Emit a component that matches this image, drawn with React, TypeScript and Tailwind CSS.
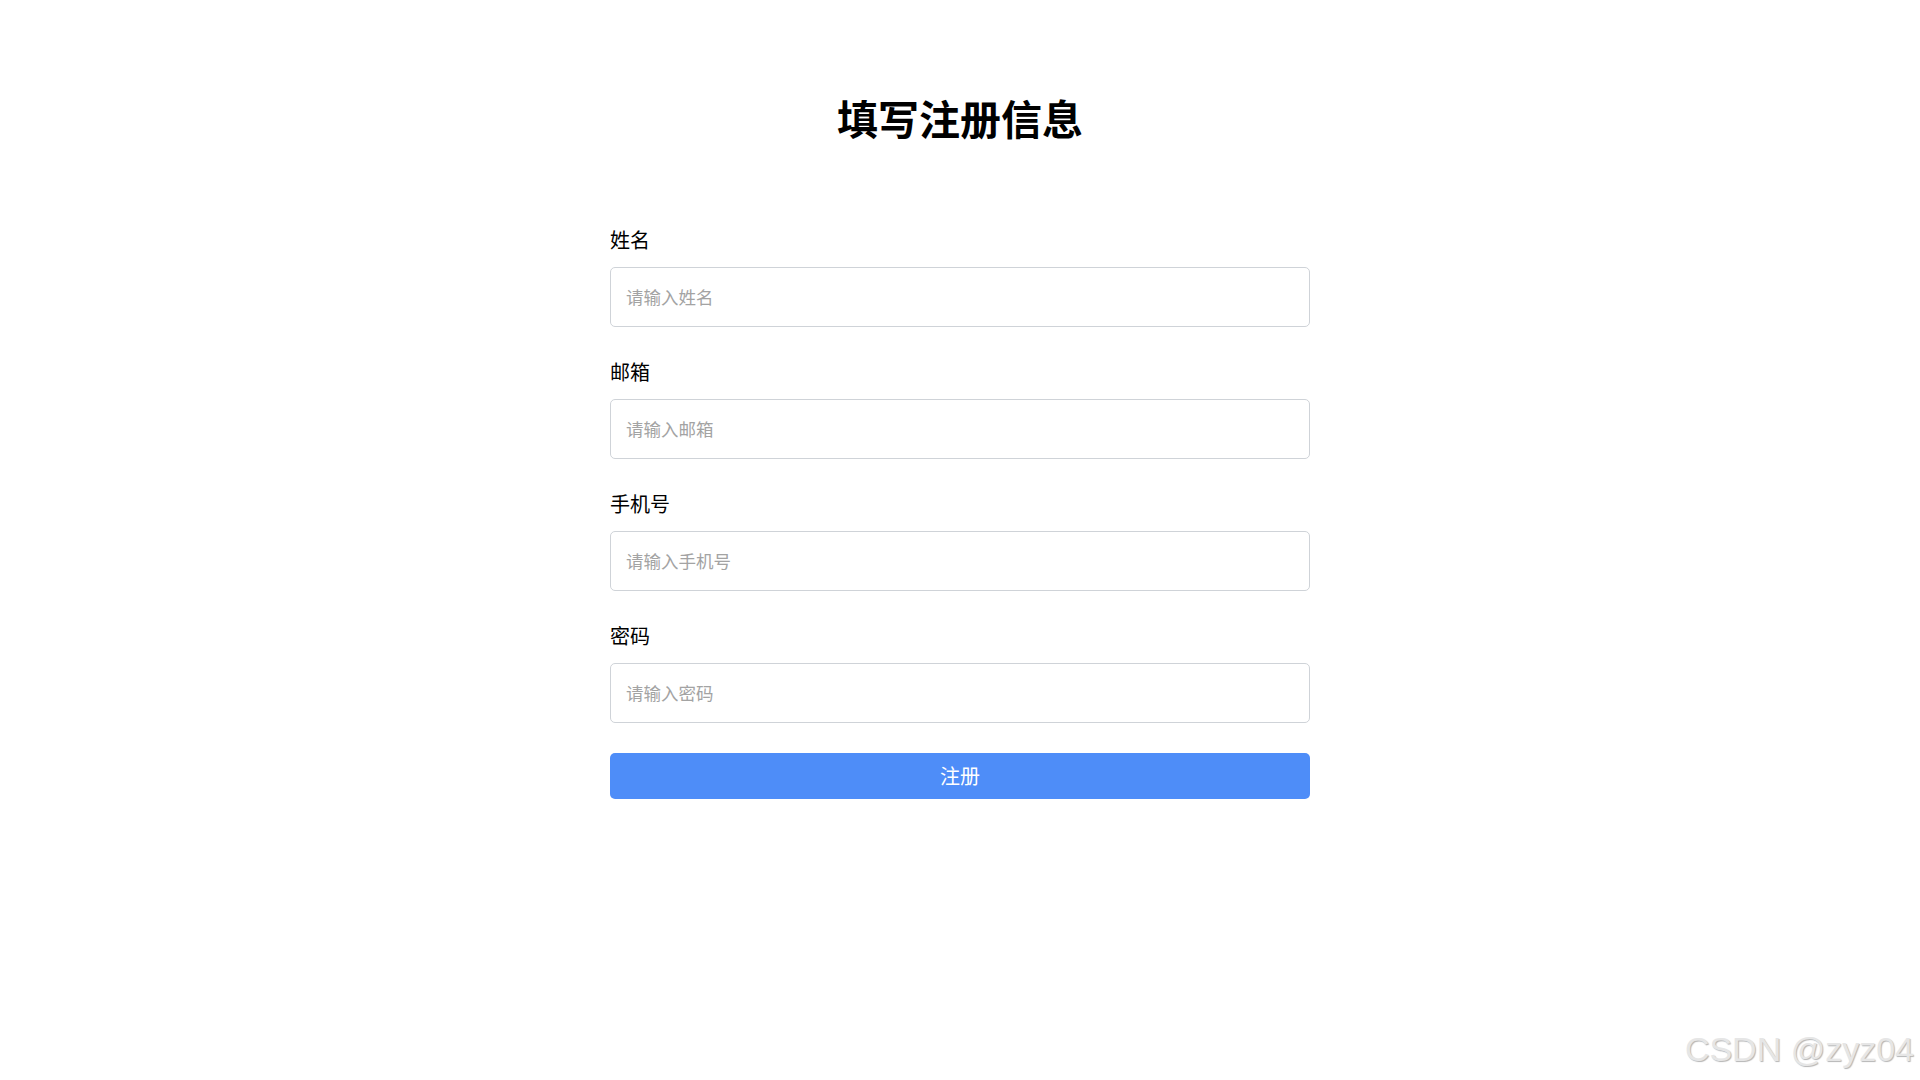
import { useState } from "react";

const fields = [
  { key: "name", label: "姓名", placeholder: "请输入姓名", type: "text" },
  { key: "email", label: "邮箱", placeholder: "请输入邮箱", type: "email" },
  { key: "phone", label: "手机号", placeholder: "请输入手机号", type: "tel" },
  { key: "password", label: "密码", placeholder: "请输入密码", type: "password" },
];

export default function App() {
  const [form, setForm] = useState<Record<string, string>>({ name: "", email: "", phone: "", password: "" });

  return (
    <div className="relative min-h-screen bg-white font-['Noto_Sans_CJK_SC',sans-serif] text-black">
      <div className="mx-auto w-[700px] pt-[97px]">
        <h1 className="text-center text-[41px] font-bold leading-[41px]">填写注册信息</h1>

        <form className="mt-[87px] flex flex-col" onSubmit={(e) => e.preventDefault()}>
          {fields.map((f) => (
            <div key={f.key} className="mb-[30px]">
              <label className="mb-[12px] block text-[20px] leading-[30px]">{f.label}</label>
              <input
                type={f.type}
                value={form[f.key]}
                onChange={(e) => setForm((s) => ({ ...s, [f.key]: e.target.value }))}
                placeholder={f.placeholder}
                className="block h-[60px] w-full rounded-[5px] border border-[#cfd3d8] px-[15px] pb-[2px] text-[17.5px] outline-none placeholder:text-[#a3a3a3]"
              />
            </div>
          ))}
          <button type="submit" className="h-[46px] w-full rounded-[5px] bg-[#4e8df8] text-[20px] text-white">
            注册
          </button>
        </form>
      </div>

      <div className="absolute bottom-[14px] right-[6px] font-['Liberation_Sans',sans-serif] text-[34px] leading-none text-[#e6e6e6] [text-shadow:1px_1px_1px_#b5b5b5]">
        CSDN @zyz04
      </div>
    </div>
  );
}
